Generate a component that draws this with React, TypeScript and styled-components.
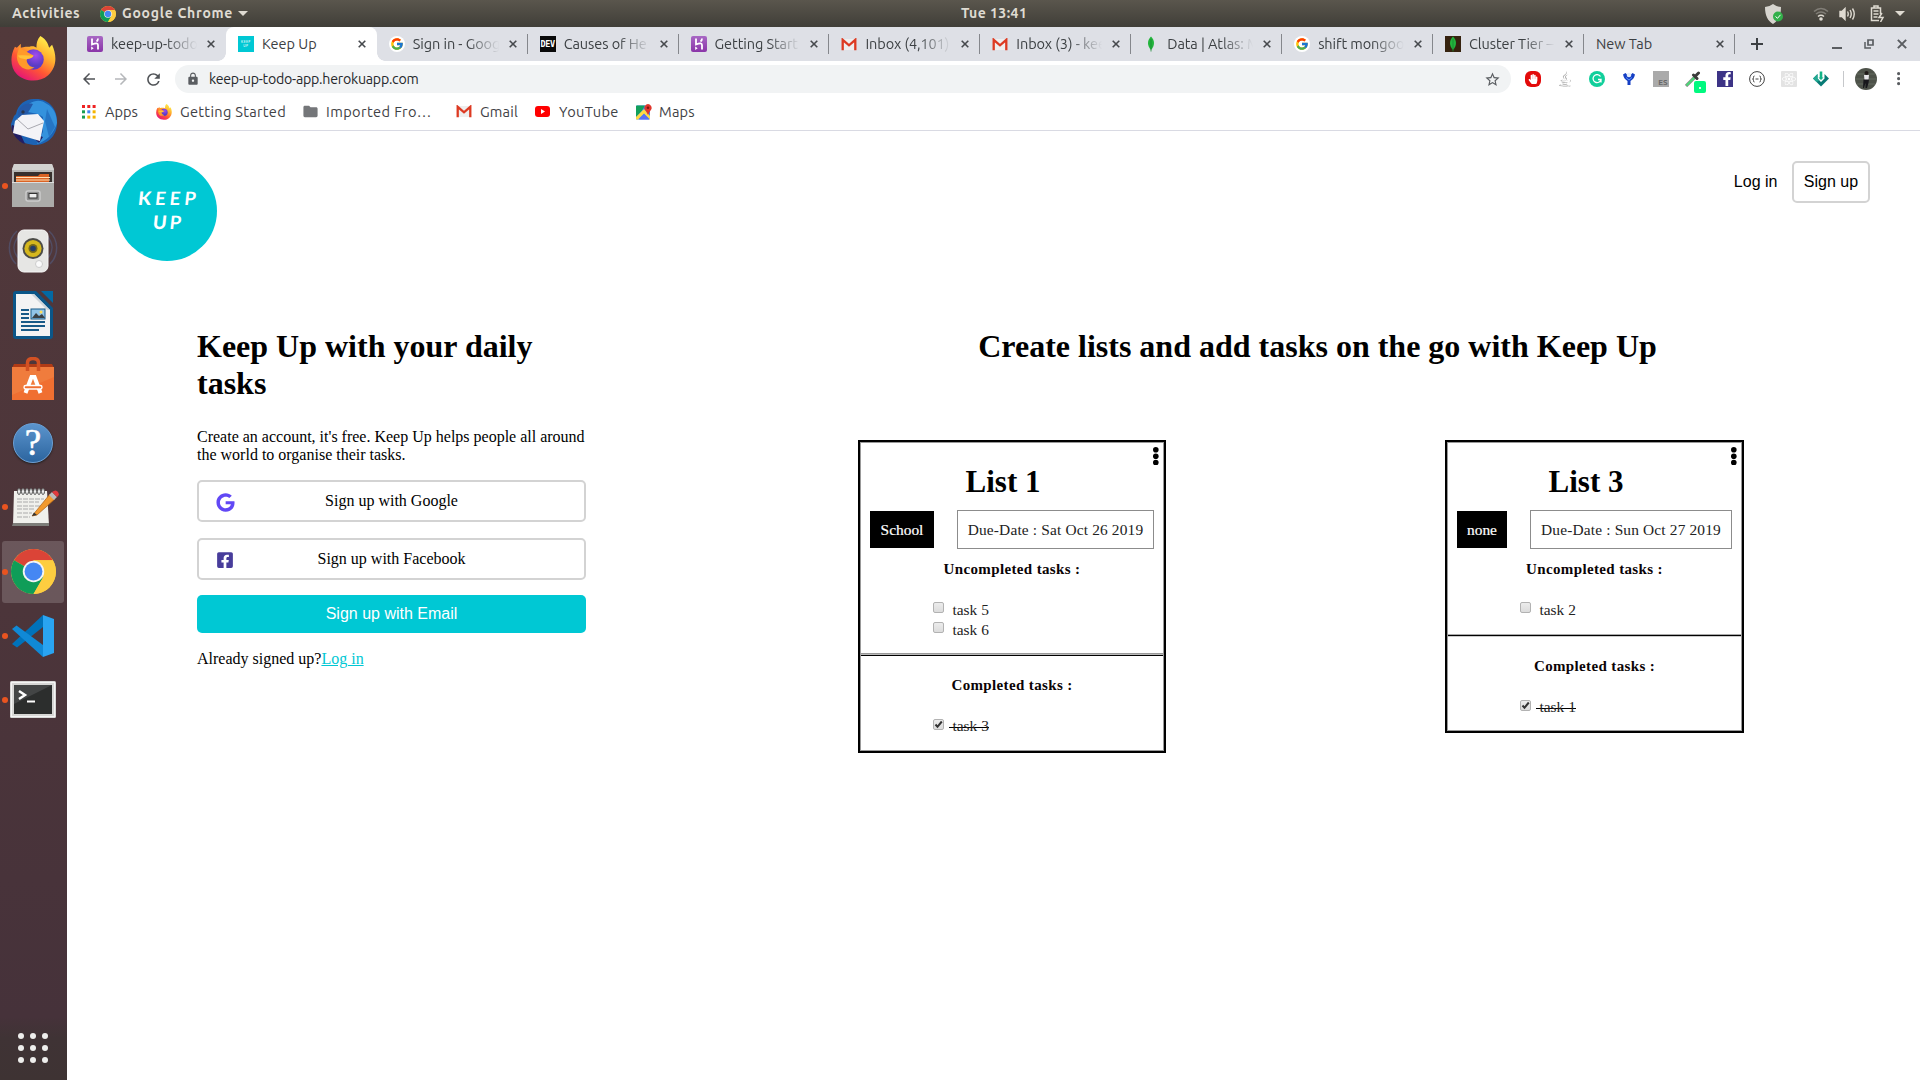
import React from 'react';
import styled, { createGlobalStyle } from 'styled-components';
import { FaGoogle, FaFacebookSquare, FaJava, FaReact, FaHandPaper, FaFacebookF } from 'react-icons/fa';
import { FcGoogle } from 'react-icons/fc';
import { MdLock, MdStarBorder, MdRefresh, MdArrowBack, MdArrowForward, MdFolder } from 'react-icons/md';

const GlobalStyle = createGlobalStyle`
  * { box-sizing: border-box; }
  body { margin: 0; background: #fff; overflow: hidden; }
  svg { display: block; flex: none; }
`;

const uiFont = `'Ubuntu', 'Noto Sans', sans-serif`;
const serif = `'Liberation Serif', 'Times New Roman', serif`;
const sans = `'Liberation Sans', Arial, sans-serif`;

/* ---------- desktop shell ---------- */

const Desktop = styled.div`
  width: 1920px;
  height: 1080px;
  display: grid;
  grid-template: 27px 1fr / 67px 1fr;
  overflow: hidden;
`;

const TopBar = styled.header`
  grid-column: 1 / 3;
  display: grid;
  grid-template-columns: 961px 66px 1fr;
  align-items: center;
  background: linear-gradient(#5a564d, #403e38);
  color: #dfdbd2;
  font: 600 14px/25px ${uiFont};
`;

const BarGroup = styled.div<{ $end?: boolean }>`
  display: flex;
  align-items: center;
  height: 27px;
  padding: ${p => (p.$end ? '0 15px 0 0' : '0 0 0 12px')};
  justify-content: ${p => (p.$end ? 'flex-end' : 'flex-start')};
`;

const BarText = styled.span<{ $width: number; $spacing?: number }>`
  width: ${p => p.$width}px;
  letter-spacing: ${p => p.$spacing ?? 0}px;
  white-space: nowrap;
`;

const Gap = styled.span<{ $w: number }>`
  flex: none;
  width: ${p => p.$w}px;
`;

const Caret = styled.span`
  border: 5px solid transparent;
  border-top-color: #dfdbd2;
  border-bottom: 0;
`;

const Dock = styled.nav`
  display: flex;
  flex-direction: column;
  gap: 2.2px;
  background: linear-gradient(#52393b, #4c353a 55%, #46323a 94%, #3f3335 96%, #3e3333);
`;

const DockItem = styled.div<{ $active?: boolean; $running?: boolean }>`
  flex: none;
  width: 62px;
  height: 62px;
  margin-left: 2px;
  border-radius: 3px;
  display: flex;
  align-items: center;
  background: ${p => (p.$active ? 'rgba(255,255,255,.17)' : 'transparent')};
  &::before {
    content: '';
    flex: none;
    width: 6px;
    height: 6px;
    border-radius: 50%;
    background: ${p => (p.$running ? '#e95420' : 'transparent')};
  }
`;

const AppGrid = styled.div`
  margin: auto 0 17px 18px;
  display: grid;
  grid-template-columns: repeat(3, 6px);
  gap: 6px;
`;

const GridDot = styled.i`
  height: 6px;
  border-radius: 50%;
  background: #eeeeec;
`;

/* ---------- browser ---------- */

const Browser = styled.main`
  display: flex;
  flex-direction: column;
  min-width: 0;
  background: #fff;
`;

const TabStrip = styled.div`
  height: 34px;
  padding-left: 8px;
  display: flex;
  background: #dee0e6;
  color: #3c4043;
  font: 14.5px/34px ${uiFont};
`;

const TabBox = styled.div<{ $active?: boolean; $line?: boolean }>`
  flex: none;
  width: 150.9px;
  height: 34px;
  padding: 0 8px 0 12px;
  display: flex;
  align-items: center;
  position: relative;
  background: ${p => (p.$active ? '#fff' : 'transparent')};
  border-radius: 8px 8px 0 0;
  &::before, &::after {
    content: ${p => (p.$active ? "''" : 'none')};
    position: absolute;
    bottom: 0;
    width: 8px;
    height: 8px;
  }
  &::before { left: -8px; background: radial-gradient(circle at 0 0, transparent 7.5px, #fff 8px); }
  &::after { right: -8px; background: radial-gradient(circle at 100% 0, transparent 7.5px, #fff 8px); }
  ${p => p.$line && `
    &::after { content: ''; right: 0; bottom: 7px; width: 1px; height: 20px; background: #85878c; }
  `}
`;

const TabTitle = styled.span<{ $fade?: boolean }>`
  flex: 1;
  min-width: 0;
  overflow: hidden;
  white-space: nowrap;
  ${p => p.$fade && 'letter-spacing: -0.08px; mask-image: linear-gradient(90deg, #000 62%, transparent 99%);'}
`;

const Favicon = styled.span`
  flex: none;
  width: 16px;
  height: 16px;
  margin-right: 8px;
  display: grid;
  place-items: center;
`;

const CloseSlot = styled.span`
  flex: none;
  width: 14px;
  margin-left: 6px;
  display: grid;
  place-items: center;
`;

const SquareIcon = styled.span<{ $bg: string; $color?: string; $radius?: number }>`
  width: 16px;
  height: 16px;
  flex: none;
  border-radius: ${p => p.$radius ?? 0}px;
  background: ${p => p.$bg};
  color: ${p => p.$color ?? '#fff'};
  display: flex;
  align-items: center;
  justify-content: center;
  overflow: hidden;
`;

const DevText = styled.span`
  font: 700 8.5px/16px 'DejaVu Sans Mono', monospace;
  letter-spacing: -0.3px;
`;

const TinyLogo = styled.span`
  font: 400 3.2px/4.5px 'Lato', sans-serif;
  letter-spacing: 0.5px;
  text-align: center;
`;

const WindowControls = styled.div`
  display: flex;
  align-items: center;
  padding-left: 16px;
`;

const ToolBar = styled.div`
  height: 36px;
  padding: 0 14px 0 13px;
  display: flex;
  align-items: center;
`;

const NavButtons = styled.div`
  width: 95px;
  display: flex;
  align-items: center;
  gap: 14px;
  color: #505357;
`;

const Omnibox = styled.div`
  width: 1336px;
  height: 28px;
  padding: 0 10px 0 11px;
  border-radius: 14px;
  display: flex;
  align-items: center;
  background: #f1f3f4;
  color: #5a5d61;
`;

const Url = styled.span`
  flex: 1;
  margin-left: 9px;
  color: #26282b;
  font: 14.2px/28px ${uiFont};
  letter-spacing: -0.24px;
`;

const Extensions = styled.div`
  display: flex;
  gap: 16px;
  margin-left: 14px;
`;

const PickerWrap = styled.span`
  position: relative;
  width: 16px;
  height: 16px;
`;

const PickerBadge = styled.i`
  position: absolute;
  left: 9px;
  top: 10px;
  width: 12px;
  height: 12px;
  border-radius: 2px;
  background: #00f97f;
  &::after {
    content: '';
    position: absolute;
    left: 5px;
    top: 6px;
    width: 2px;
    height: 2px;
    background: #d8ffe9;
  }
`;

const EsText = styled.span`
  align-self: flex-end;
  margin-left: 4px;
  color: #686868;
  font: 700 8px/9px ${uiFont};
`;

const Bookmarks = styled.div`
  height: 34px;
  padding: 0 0 4px 14px;
  display: flex;
  align-items: center;
  border-bottom: 1px solid #d9dae3;
  color: #3f4246;
  font: 14.6px/20px ${uiFont};
`;

const Bookmark = styled.div<{ $width: number; $spacing?: number }>`
  width: ${p => p.$width}px;
  display: flex;
  align-items: center;
  white-space: nowrap;
  letter-spacing: ${p => p.$spacing ?? 0}px;
`;

/* ---------- Keep Up page ---------- */

const Page = styled.section`
  flex: 1;
  padding: 30px 50px 0;
  font: 16px/18px ${serif};
  color: #000;
`;

const PageHeader = styled.div`
  height: 100px;
  display: flex;
  justify-content: space-between;
`;

const Logo = styled.div`
  width: 100px;
  height: 100px;
  border-radius: 50%;
  padding-top: 26px;
  background: #00c8d4;
  color: #fff;
  text-align: center;
  font: 700 18.5px/23.5px 'Lato', sans-serif;
`;

const LogoWord = styled.div<{ $spacing: number }>`
  letter-spacing: ${p => p.$spacing}px;
  margin-right: -${p => p.$spacing}px;
  transform: skewX(-6deg);
  &::first-letter { font-weight: 900; }
`;

const AuthNav = styled.div`
  display: flex;
  gap: 14.5px;
  font: 16px/18px ${sans};
`;

const NavLink = styled.a<{ $boxed?: boolean }>`
  height: 42px;
  padding: 10px ${p => (p.$boxed ? 9.9 : 0)}px;
  border: 2px solid ${p => (p.$boxed ? '#d3d3d3' : 'transparent')};
  ${p => !p.$boxed && 'border-width: 2px 0;'}
  border-radius: 5px;
`;

const Hero = styled.div`
  display: flex;
  padding: 67px 0 0 80px;
`;

const SignUp = styled.div`
  flex: none;
  width: 389px;
  margin-right: 272px;
`;

const Heading = styled.h1`
  margin: 0;
  font: 700 32px/37px ${serif};
`;

const Intro = styled.p`
  margin: 26px 0 16px;
`;

const SocialButton = styled.div`
  height: 42px;
  margin-bottom: 16px;
  padding: 0 17px;
  display: grid;
  grid-template-columns: 20px 1fr 20px;
  align-items: center;
  text-align: center;
  border: 2px solid #d3d3d3;
  border-radius: 5px;
`;

const SocialIcon = styled.span<{ $color: string }>`
  color: ${p => p.$color};
  padding-top: 2px;
`;

const EmailButton = styled.div`
  height: 38px;
  margin-top: -1px;
  border-radius: 5px;
  background: #00c8d4;
  color: #fff;
  text-align: center;
  font: 16px/37px ${sans};
`;

const Already = styled.p`
  margin: 17px 0 0;
`;

const LoginLink = styled.a`
  color: #00c8d4;
  text-decoration: underline;
`;

const Showcase = styled.div`
  flex: none;
  width: 886px;
`;

const ShowcaseTitle = styled(Heading)`
  padding-left: 33px;
  text-align: center;
`;

const Cards = styled.div`
  margin-top: 75px;
  display: flex;
  justify-content: space-between;
  align-items: flex-start;
`;

const Card = styled.article<{ $width: number }>`
  width: ${p => p.$width}px;
  border: 2px solid #000;
  outline: 1px solid #999;
  outline-offset: -3px;
  font: 15.4px/19.3px ${serif};
  color: #222;
`;

const CardMenu = styled.div`
  height: 20px;
  padding: 5px 5.5px 0 0;
  display: flex;
  justify-content: flex-end;
`;

const CardTitle = styled.h2<{ $shift: number }>`
  margin: 0;
  padding-right: ${p => p.$shift}px;
  color: #000;
  text-align: center;
  font: 700 31px/40px ${serif};
`;

const CardMeta = styled.div`
  margin-top: 8px;
  padding: 0 10px;
  height: 39px;
  display: flex;
  justify-content: space-between;
  align-items: center;
`;

const Tag = styled.span<{ $width: number }>`
  width: ${p => p.$width}px;
  height: 37px;
  background: #000;
  color: #fff;
  text-align: center;
  font: 400 15.4px/38px ${serif};
  -webkit-text-stroke: 0.2px #fff;
`;

const DueDate = styled.span<{ $width: number }>`
  width: ${p => p.$width}px;
  height: 39px;
  border: 1px solid #8c8c8c;
  text-align: center;
  line-height: 38px;
  white-space: nowrap;
  letter-spacing: 0.16px;
`;

const Section = styled.div<{ $height: number; $top: number }>`
  height: ${p => p.$height}px;
  padding-top: ${p => p.$top}px;
`;

const Divider = styled.div<{ $thin?: boolean }>`
  height: 3px;
  background: ${p => (p.$thin
    ? 'linear-gradient(#aaa 1px, #000 1px 2px, #ccc 2px)'
    : 'linear-gradient(#999 1px, #bbb 1px 2px, #000 2px)')};
`;

const SectionTitle = styled.h3`
  margin: 0 0 20.5px;
  color: #0b0406;
  text-align: center;
  font: 700 15px/20px ${serif};
  letter-spacing: 0.36px;
`;

const TaskRow = styled.div`
  height: 20px;
  padding-left: 73px;
  display: flex;
  align-items: flex-start;
`;

const Box = styled.span<{ $done?: boolean }>`
  flex: none;
  width: 11px;
  height: 11px;
  margin: ${p => (p.$done ? 3 : 2)}px 5px 0 0;
  border: 1px solid #b2b2b2;
  border-radius: 2px;
  background: linear-gradient(#ececec, #dcdcdc);
`;

const TaskName = styled.span<{ $done?: boolean }>`
  padding-left: 3.5px;
  white-space: nowrap;
  background: ${p => (p.$done ? 'linear-gradient(#000,#000) 0 11px / 100% 1.4px no-repeat' : 'none')};
`;

/* ---------- drawings ---------- */

const ChromeLogo = ({ size }: { size: number }) => (
  <svg width={size} height={size} viewBox="0 0 44 44">
    <circle cx="22" cy="22" r="22" fill="#fdcd40" />
    <path d="M22 22 3 11A22 22 0 0 1 41 11H22Z" fill="#db4437" />
    <path d="M3 11A22 22 0 0 0 22 44L31.5 27.5 22 22Z" fill="#0f9d58" />
    <path d="M22 11H41A22 22 0 0 1 22 44L31.5 27.5Z" fill="#fdcd40" />
    <circle cx="22" cy="22" r="10.5" fill="#f4f4f4" />
    <circle cx="22" cy="22" r="8.7" fill="#4587f3" />
  </svg>
);

const Firefox = ({ size }: { size: number }) => (
  <svg width={size} height={size} viewBox="0 0 46 46">
    <defs>
      <linearGradient id="ffBody" x1=".85" y1=".05" x2=".25" y2="1">
        <stop offset="0" stopColor="#fff44f" /><stop offset=".35" stopColor="#ffb02e" />
        <stop offset=".65" stopColor="#ff5634" /><stop offset="1" stopColor="#e3107c" />
      </linearGradient>
      <radialGradient id="ffGlobe" cx=".6" cy=".3"><stop offset="0" stopColor="#a14bf0" /><stop offset="1" stopColor="#5b3cc4" /></radialGradient>
    </defs>
    <path d="M30 0C37 4 38 9 39 12L42 9C47 20 47 32 38 40 29 48 14 47 6 39-1 32-1 20 4 11L6 12 10 8V12C13 11 17 11 19 11 22 10 25 11 26 12 26 7 27 3 30 0Z" fill="url(#ffBody)" />
    <circle cx="23" cy="24" r="10.5" fill="url(#ffGlobe)" />
    <path d="M10 8C8 13 11 14 14 15L23 20C22 23 18 23 16 24 16 29 20 32 24 32 17 37 7 33 6 22 6 17 8 14 10 8Z" fill="#ff9a2a" />
    <path d="M7 20C13 19 18 20 23 20 22 23 18 23 16 24 13 23 9 24 7 20Z" fill="#ffc13a" />
  </svg>
);

const Thunderbird = () => (
  <svg width="50" height="50" viewBox="0 0 50 50">
    <path d="M7 17C9 6 18 1 27 2 40 2 48 12 48 24 49 36 41 47 27 48 13 48 3 39 2 27L5 19Z" fill="#1c63b5" />
    <path d="M14 14C20 3 31 1 38 7 44 10 48 17 48 26 45 36 38 44 28 47L34 35V20C28 15 20 16 14 14Z" fill="#3492dd" />
    <path d="M38 12 46 30 40 40 36 24Z" fill="#1c63b5" opacity=".6" />
    <path d="M9 18C9 10 16 5 24 7 21 12 18 20 11 21Z" fill="#2459a8" />
    <path d="M3 28C1 35 9 45 16 47L12 38 25 41 30 46 34 40 6 29Z" fill="#221e64" />
    <path d="M4 36 6 24 13 18 29 17 35 24 31 44Z" fill="#f3f3f7" />
    <path d="m8 22 11 10 15-6" fill="none" stroke="#a8a8b0" />
    <circle cx="14" cy="15" r="1.7" fill="#27364f" />
  </svg>
);

const Files = () => (
  <svg width="44" height="44" viewBox="0 0 44 44">
    <path d="M3 0H41L43 5V43H1V5Z" fill="#b8b8b6" />
    <path d="M3 0H41L43 6H1Z" fill="#d2d2d0" />
    <path d="M3 8H41V19H3Z" fill="#38302d" />
    <path d="M5 12 27 12 29 10H38V18H5Z" fill="#db6425" />
    <path d="M5 13.5H39M5 16H39" stroke="#ffe0b5" />
    <rect x="1" y="18" width="42" height="25" fill="#acacaa" />
    <path d="M1 18.5H43" stroke="#ddd" />
    <rect x="15" y="27" width="14" height="10" rx="2" fill="#8f8f8f" stroke="#ccc" strokeWidth="1.5" />
    <rect x="18" y="29.5" width="8" height="4.5" fill="#eee" stroke="#333" />
  </svg>
);

const Rhythmbox = () => (
  <svg width="50" height="46" viewBox="0 0 50 46">
    <g fill="none" stroke="#53618c" strokeWidth="1.5" opacity=".5">
      <path d="M9 3C-1 12-1 27 8 36M41 3C51 12 51 27 42 36M12 7C4 15 4 24 12 32M38 7C46 15 46 24 38 32" />
    </g>
    <rect x="10" y="2" width="30" height="42" rx="6" fill="#e6e6e4" stroke="#f7f7f7" />
    <circle cx="25" cy="20.5" r="10.5" fill="#4c4c48" />
    <circle cx="25" cy="20.5" r="8.6" fill="#d5b71e" />
    <circle cx="25" cy="20.5" r="4.5" fill="#75681c" />
    <circle cx="25" cy="20.5" r="2.8" fill="#253d69" />
    <circle cx="31" cy="36" r="3.5" fill="#fafafa" stroke="#ccc" />
  </svg>
);

const Writer = () => (
  <svg width="40" height="48" viewBox="0 0 40 48">
    <path d="M3 0H23L40 17V45Q40 48 37 48H3Q0 48 0 45V3Q0 0 3 0Z" fill="#0b5688" />
    <path d="M28 0H40V12Z" fill="#0369a3" />
    <path d="M3 3H21L37 19V45H3Z" fill="#f3f3f3" />
    <path d="M21 3 37 19H34L18 3Z" fill="#cfd5da" />
    <path d="M8 19H16M8 23H16M8 27H16M8 31H32M8 35H32M8 39H26" stroke="#185a87" strokeWidth="2" />
    <rect x="18" y="18" width="14" height="10" fill="#91c4e8" stroke="#185a87" />
    <path d="m19 27 4-5 3 3 3-2 3 4Z" fill="#3b4145" /><circle cx="28" cy="21" r="1.5" fill="#ffde5b" />
  </svg>
);

const Software = () => (
  <svg width="42" height="44" viewBox="0 0 42 44">
    <path d="M2 7H40L42 11H0Z" fill="#b03b16" />
    <path d="M0 10H42V43H0Z" fill="#f06f31" />
    <path d="M0 10H42V20L0 38Z" fill="#ef8c4e" opacity=".45" />
    <path d="M15.5 14V6Q15.5 1.5 21 1.5T26.5 6V14" fill="none" stroke="#d25123" strokeWidth="3.5" />
    <path d="M13.500 36 19.500 20H22.500L28.500 36" fill="none" stroke="#fff" strokeWidth="4" />
    <rect x="12" y="28.5" width="18" height="3.500" rx="1.7" fill="#f06f31" stroke="#fff" strokeWidth="1.4" />
  </svg>
);

const HelpGlyph = styled.span`
  width: 40px;
  height: 40px;
  border-radius: 50%;
  border: 1.5px solid #6aa0d6;
  background: linear-gradient(#5b94cd, #2c659f);
  box-shadow: 0 1px 2px #222;
  color: #fff;
  text-align: center;
  font: 37px/37px ${serif};
  -webkit-text-stroke: 0.6px #fff;
`;

const Editor = () => (
  <svg width="47" height="38" viewBox="0 0 47 38">
    <path d="M2 3H35L37 37H1Z" fill="#f0f0ec" /><path d="M1 35H37V38H0Z" fill="#7d7d79" />
    {[6, 10, 14, 18, 22, 26, 30].map(x => <ellipse key={x} cx={x + 1} cy="3.5" rx="1.5" ry="3" fill="#eee" stroke="#555" />)}
    <path d="M5 11H32M5 14H27M5 18H30M5 21H22M5 25H20M5 29H18" stroke="#aaa" strokeDasharray="5 1" />
    <path d="M20 28 38 6 43 11 25 27Z" fill="#f29a2e" stroke="#a95f15" strokeWidth=".7" />
    <path d="M20 28 22 24.5 25 27Z" fill="#333" />
    <path d="M37 7 40 4 45 9 42 12Z" fill="#b9b9b9" /><path d="M40 4Q44 1 46 4T45 9Z" fill="#e03a3e" />
  </svg>
);

const Code = () => (
  <svg width="42" height="42" viewBox="0 0 42 42">
    <path d="M0 29 31 0V12L5 32.5Z" fill="#0072ba" />
    <path d="M0 14 4.500 10.500 31 30V42L0 14Z" fill="#1089d6" />
    <path d="M31 0 42 4V38L31 42Z" fill="#2aa4f1" />
  </svg>
);

const Terminal = () => (
  <svg width="46" height="37" viewBox="0 0 46 37">
    <rect width="46" height="37" rx="1.5" fill="#d7d7d5" />
    <rect x="1.5" y="1.5" width="43" height="34" fill="none" stroke="#f5f5f5" />
    <rect x="4" y="4" width="38" height="29" fill="#2c2e2d" />
    <path d="M4 4H42L4 23Z" fill="#434545" />
    <path d="m9 10 6 4-6 4" fill="none" stroke="#fff" strokeWidth="2.5" /><path d="M17 20.5H25" stroke="#fff" strokeWidth="2" />
  </svg>
);

const Cross = ({ size = 8, color = '#46494d' }: { size?: number; color?: string }) => (
  <svg width={size} height={size} viewBox="0 0 8 8"><path d="m.7.7 6.600 6.600M7.300.7.7 7.300" stroke={color} strokeWidth="1.6" /></svg>
);

const Leaf = () => (
  <svg width="8" height="16" viewBox="0 0 8 16">
    <path d="M4 .5C7.500 4 8.500 9 4 14-.5 9 .5 4 4 .5Z" fill="#22b43c" /><path d="M4 3V15.5" stroke="#168a30" strokeWidth=".8" />
  </svg>
);

const Gmail = () => (
  <svg width="16" height="13" viewBox="0 0 16 13">
    <path d="M2 1H14V12H2Z" fill="#eee" />
    <path d="M1.700 12.300V1.800L8 7.300 14.300 1.800V12.300" fill="none" stroke="#dd3a22" strokeWidth="2.3" />
  </svg>
);

const YouTube = () => (
  <svg width="15" height="13" viewBox="0 0 15 13"><rect y="1" width="15" height="11" rx="3" fill="#f00" /><path d="m6 4 4 2.500L6 9Z" fill="#fff" /></svg>
);

const Maps = () => (
  <svg width="16" height="16" viewBox="0 0 16 16">
    <rect y="1.5" width="14" height="14" rx="1" fill="#4285f4" />
    <path d="M0 2Q0 1.500 1 1.500H9L5 8 0 13Z" fill="#12a05c" /><path d="m0 13 8-8 6 7v3.500L8 9.500 2 15.500H0Z" fill="#ffda44" />
    <path d="m8 10 5.500 5.500H3Z" fill="#5b6ff5" />
    <path d="M12 0A4 4 0 0 1 15.500 5Q14 7 12 11 10 7 8.500 5A4 4 0 0 1 12 0Z" fill="#e0362c" /><circle cx="12" cy="3.8" r="1.3" fill="#82160f" />
  </svg>
);

const AppsIcon = () => (
  <svg width="14" height="14" viewBox="0 0 14 14">
    {['#e22', '#e22', '#e22', '#1a9e51', '#4285f4', '#f4b400', '#1a9e51', '#f4b400', '#f4b400'].map((c, i) => (
      <rect key={i} x={(i % 3) * 5.3} y={Math.floor(i / 3) * 5.3} width="3" height="3" fill={c} />
    ))}
  </svg>
);

const Shield = () => (
  <svg width="20" height="22" viewBox="0 0 20 22">
    <path d="M9 1Q13 4 17 4C17 13 14 18 9 21 4 18 1 13 1 4Q5 4 9 1Z" fill="#d7d5cf" />
    <circle cx="14" cy="13.5" r="5" fill="#33b04a" /><path d="m11.500 13.500 2 1.800 3-3.500" fill="none" stroke="#fff" />
  </svg>
);

const Wifi = () => (
  <svg width="16" height="14" viewBox="0 0 16 14" fill="none">
    <path d="M1 4.500Q8-1.500 15 4.500M3 7Q8 3 13 7" stroke="#817e77" strokeWidth="1.6" />
    <path d="M5 9.500Q8 7 11 9.500" stroke="#dfdbd2" strokeWidth="1.5" /><circle cx="8" cy="12" r="1.8" fill="#dfdbd2" />
  </svg>
);

const Volume = () => (
  <svg width="17" height="14" viewBox="0 0 17 14" fill="none" stroke="#dfdbd2" strokeWidth="1.4">
    <path d="M1 4.500H3L6 1.500V12.500L3 9.500H1Z" fill="#dfdbd2" /><path d="M8.500 4.500Q10 7 8.500 9.500M11 3Q13.500 7 11 11M13.500 1.500Q17 7 13.500 12.500" />
  </svg>
);

const Battery = () => (
  <svg width="15" height="17" viewBox="0 0 15 17" fill="none" stroke="#dfdbd2" strokeWidth="1.5">
    <path d="M4 3V1H8V3M9 15.500H1.500V3H10.500V9M3.500 6H8.500M3.500 9H8.500M3.500 12H7.500" /><path d="m12 8-3 4.500h4L10.500 17" />
  </svg>
);

const Adblock = () => (
  <SquareIcon $bg="#e30b0b" $radius={6}><FaHandPaper size={10} /></SquareIcon>
);

const GoogleFavicon = () => <SquareIcon $bg="#fff" $radius={8}><FcGoogle size={14} /></SquareIcon>;

const HerokuIcon = () => (
  <SquareIcon $bg="linear-gradient(#a868c4,#8a35a8)" $radius={2}>
    <svg width="16" height="16" viewBox="0 0 16 16" fill="none" stroke="#fff" strokeWidth="1.8">
      <path d="M5 2.500V8.500Q11 6 11 9V13.500M11 2.500Q11 4.500 9.500 5.500" /><path d="M4.200 10.500 6.700 12.200 4.200 14Z" fill="#fff" stroke="none" />
    </svg>
  </SquareIcon>
);

const Kebab = ({ r = 1.6, gap = 5, color = '#5a5d61' }: { r?: number; gap?: number; color?: string }) => (
  <svg width={r * 2} height={gap * 2 + r * 2}>
    {[0, 1, 2].map(i => <circle key={i} cx={r} cy={r + gap * i} r={r} fill={color} />)}
  </svg>
);

/* ---------- data ---------- */

const tabs = [
  { title: 'keep-up-todo', icon: <HerokuIcon />, fade: true },
  { title: 'Keep Up', icon: <SquareIcon $bg="#00c8d4"><TinyLogo>KEEP<br />UP</TinyLogo></SquareIcon>, active: true },
  { title: 'Sign in - Goog', icon: <GoogleFavicon />, fade: true, line: true },
  { title: 'Causes of He', icon: <SquareIcon $bg="#0a0a0a"><DevText>DEV</DevText></SquareIcon>, fade: true, line: true },
  { title: 'Getting Start', icon: <HerokuIcon />, fade: true, line: true },
  { title: 'Inbox (4,101)', icon: <Gmail />, fade: true, line: true },
  { title: 'Inbox (3) - kee', icon: <Gmail />, fade: true, line: true },
  { title: 'Data | Atlas: M', icon: <Leaf />, fade: true, line: true },
  { title: 'shift mongoo', icon: <GoogleFavicon />, fade: true, line: true },
  { title: 'Cluster Tier –', icon: <SquareIcon $bg="#36230f"><Leaf /></SquareIcon>, fade: true, line: true },
  { title: 'New Tab', line: true },
];

const dock = [
  { icon: <Firefox size={45} />, x: 3 },
  { icon: <Thunderbird />, x: 1 },
  { icon: <Files />, x: 3, running: true },
  { icon: <Rhythmbox />, x: 0 },
  { icon: <Writer />, x: 5 },
  { icon: <Software />, x: 4 },
  { icon: <HelpGlyph>?</HelpGlyph>, x: 5 },
  { icon: <Editor />, x: 4, running: true },
  { icon: <ChromeLogo size={45} />, x: 3, running: true, active: true },
  { icon: <Code />, x: 4, running: true },
  { icon: <Terminal />, x: 2, running: true },
];

interface TodoList {
  name: string; tag: string; tagWidth: number; due: string; dueWidth: number;
  width: number; shift: number; open: string[]; done: string[]; openHeight: number; doneTop: number; doneHeight: number; thin?: boolean;
}

const lists: TodoList[] = [
  { name: 'List 1', tag: 'School', tagWidth: 64, due: 'Sat Oct 26 2019', dueWidth: 197, width: 308, shift: 18, open: ['task 5', 'task 6'], done: ['task 3'], openHeight: 104, doneTop: 19, doneHeight: 95 },
  { name: 'List 3', tag: 'none', tagWidth: 50, due: 'Sun Oct 27 2019', dueWidth: 202, width: 299, shift: 17, open: ['task 2'], done: ['task 1'], openHeight: 85, doneTop: 19, doneHeight: 94, thin: true },
];

const Task = ({ name, done }: { name: string; done?: boolean }) => (
  <TaskRow>
    <Box $done={done}>{done && <svg width="9" height="9" viewBox="0 0 9 9"><path d="m1.500 4.500 2 2.300L7.800 1.500" fill="none" stroke="#333" strokeWidth="2" /></svg>}</Box>
    <TaskName $done={done}>{name}</TaskName>
  </TaskRow>
);

const ListCard = ({ list }: { list: TodoList }) => (
  <Card $width={list.width}>
    <CardMenu><Kebab r={2.8} gap={6.4} color="#000" /></CardMenu>
    <CardTitle $shift={list.shift}>{list.name}</CardTitle>
    <CardMeta>
      <Tag $width={list.tagWidth}>{list.tag}</Tag>
      <DueDate $width={list.dueWidth}>Due-Date : {list.due}</DueDate>
    </CardMeta>
    <Section $height={list.openHeight} $top={10}>
      <SectionTitle>Uncompleted tasks :</SectionTitle>
      {list.open.map(t => <Task key={t} name={t} />)}
    </Section>
    <Divider $thin={list.thin} />
    <Section $height={list.doneHeight} $top={list.doneTop}>
      <SectionTitle>Completed tasks :</SectionTitle>
      {list.done.map(t => <Task key={t} name={t} done />)}
    </Section>
  </Card>
);

export default function App() {
  return (
    <Desktop>
      <GlobalStyle />
      <TopBar>
        <BarGroup>
          <BarText $width={88} $spacing={0.6}>Activities</BarText>
          <ChromeLogo size={16} />
          <Gap $w={6} />
          <BarText $width={116} $spacing={0.72}>Google Chrome</BarText>
          <Caret />
        </BarGroup>
        <BarText $width={66} $spacing={0.45}>Tue 13:41</BarText>
        <BarGroup $end>
          <Shield /><Gap $w={29} /><Wifi /><Gap $w={10} /><Volume /><Gap $w={14} /><Battery /><Gap $w={10} /><Caret />
        </BarGroup>
      </TopBar>
      <Dock>
        {dock.map((d, i) => (
          <DockItem key={i} $active={d.active} $running={d.running}><Gap $w={d.x} />{d.icon}</DockItem>
        ))}
        <AppGrid>{Array.from({ length: 9 }, (_, i) => <GridDot key={i} />)}</AppGrid>
      </Dock>
      <Browser>
        <TabStrip>
          {tabs.map(t => (
            <TabBox key={t.title} $active={t.active} $line={t.line}>
              {t.icon && <Favicon>{t.icon}</Favicon>}
              <TabTitle $fade={t.fade}>{t.title}</TabTitle>
              <CloseSlot><Cross /></CloseSlot>
            </TabBox>
          ))}
          <WindowControls>
            <svg width="12" height="12"><path d="M6 0V12M0 6H12" stroke="#3c4043" strokeWidth="2" /></svg>
            <Gap $w={69} />
            <svg width="10" height="12"><path d="M0 10H10" stroke="#5a5d61" strokeWidth="2" /></svg>
            <Gap $w={22} />
            <svg width="10" height="10" fill="none" stroke="#5a5d61"><path d="M4 1H9V6H4Z" strokeWidth="1.7" /><path d="M1 3V9H7" strokeWidth="1.5" /></svg>
            <Gap $w={23} />
            <Cross size={10} color="#5a5d61" />
          </WindowControls>
        </TabStrip>
        <ToolBar>
          <NavButtons>
            <MdArrowBack size={18} /><MdArrowForward size={18} color="#b5b7ba" /><MdRefresh size={19} />
          </NavButtons>
          <Omnibox>
            <MdLock size={14} />
            <Url>keep-up-todo-app.herokuapp.com</Url>
            <MdStarBorder size={17} />
          </Omnibox>
          <Extensions>
            <Adblock />
            <FaJava size={16} color="#a8a8a8" />
            <SquareIcon $bg="#11cf9b" $radius={8}>
              <svg width="10" height="10" viewBox="0 0 10 10" fill="none" stroke="#fff" strokeWidth="1.3"><path d="M8.500 2.500A4 4 0 1 0 9 5.500H6M9 5.500V8.500" /></svg>
            </SquareIcon>
            <svg width="16" height="16" viewBox="0 0 16 16"><path d="M2 3.500 4.500 2 8 5.500 11.500 2 14 3.500Q13 8 9.500 10V14H6.500V10Q3 8 2 3.500Z" fill="#153fc4" /><circle cx="8" cy="4" r="2.3" fill="#e4edf9" /><path d="M5 6.500 8 9 11 6.500" stroke="#5c90fa" fill="none" /></svg>
            <SquareIcon $bg="#aaa"><EsText>ES</EsText></SquareIcon>
            <PickerWrap>
              <svg width="16" height="16" viewBox="0 0 16 16"><path d="M1 15 10 6" stroke="#888" strokeWidth="3.2" /><path d="M1.500 14.500 9.500 6.500" stroke="#4bd978" strokeWidth="2" /><path d="m8.500 4 3.500 3.500M10 5.500 13.500 2" stroke="#3b3b3b" strokeWidth="3" strokeLinecap="round" /></svg>
              <PickerBadge />
            </PickerWrap>
            <SquareIcon $bg="#3d3486"><Gap $w={4} /><FaFacebookF size={14} /></SquareIcon>
            <svg width="16" height="16" viewBox="0 0 16 16" fill="none" stroke="#444"><circle cx="8" cy="8" r="7.4" /><path d="M5.500 5Q4.200 5 4.500 6.500T3.500 8Q4.700 8 4.500 9.500T5.500 11M10.500 5Q11.800 5 11.500 6.500T12.500 8Q11.300 8 11.500 9.500T10.500 11M6.500 8H9.500" /></svg>
            <SquareIcon $bg="#e3e3e3" $radius={1}><FaReact size={14} /></SquareIcon>
            <svg width="16" height="16" viewBox="0 0 16 16"><path d="M4.500 3 0 7.500 8 15.500 16 7.500 11.500 3V7.500L8 11 4.500 7.500Z" fill="#087b75" /><path d="M4.500 3 0 7.500 3.500 11 6.500 9.500 4.500 7.500Z" fill="#22a992" /><path d="M6.700 .5H9.300V6.500H10.500L8 9 5.500 6.500H6.700Z" fill="#12b487" /></svg>
          </Extensions>
          <Gap $w={14} />
          <svg width="1" height="16"><rect width="1" height="16" fill="#c6c8cb" /></svg>
          <Gap $w={11} />
          <svg width="22" height="22" viewBox="0 0 22 22">
            <circle cx="11" cy="11" r="11" fill="#4d5249" />
            <path d="M2 6H20M0 11H22M2 16H20" stroke="#656a60" />
            <circle cx="11.5" cy="5" r="2" fill="#201a19" /><path d="M9 7H14L13.500 12H9.500Z" fill="#e6e6e9" /><path d="M8.500 11.500H14L13.500 15 12 20H10.500V15L9 20H8Z" fill="#17171b" />
          </svg>
          <Gap $w={20} />
          <Kebab />
        </ToolBar>
        <Bookmarks>
          <Bookmark $width={75}><Gap $w={1} /><AppsIcon /><Gap $w={9} />Apps</Bookmark>
          <Bookmark $width={146} $spacing={0.3}><Firefox size={16} /><Gap $w={8} />Getting Started</Bookmark>
          <Bookmark $width={154} $spacing={0.4}><MdFolder size={17} color="#747679" /><Gap $w={7} />Imported Fro…</Bookmark>
          <Bookmark $width={79} $spacing={0.15}><Gmail /><Gap $w={8} />Gmail</Bookmark>
          <Bookmark $width={101} $spacing={0.35}><YouTube /><Gap $w={9} />YouTube</Bookmark>
          <Bookmark $width={80} $spacing={0.2}><Maps /><Gap $w={7} />Maps</Bookmark>
        </Bookmarks>
        <Page>
          <PageHeader>
            <Logo><LogoWord $spacing={4}>KEEP</LogoWord><LogoWord $spacing={3}>UP</LogoWord></Logo>
            <AuthNav><NavLink>Log in</NavLink><NavLink $boxed>Sign up</NavLink></AuthNav>
          </PageHeader>
          <Hero>
            <SignUp>
              <Heading>Keep Up with your daily tasks</Heading>
              <Intro>Create an account, it's free. Keep Up helps people all around the world to organise their tasks.</Intro>
              <SocialButton><SocialIcon $color="#6148f5"><FaGoogle size={19} /></SocialIcon>Sign up with Google</SocialButton>
              <SocialButton><SocialIcon $color="#483d9b"><FaFacebookSquare size={18} /></SocialIcon>Sign up with Facebook</SocialButton>
              <EmailButton>Sign up with Email</EmailButton>
              <Already>Already signed up?<LoginLink>Log in</LoginLink></Already>
            </SignUp>
            <Showcase>
              <ShowcaseTitle>Create lists and add tasks on the go with Keep Up</ShowcaseTitle>
              <Cards>{lists.map(l => <ListCard key={l.name} list={l} />)}</Cards>
            </Showcase>
          </Hero>
        </Page>
      </Browser>
    </Desktop>
  );
}
